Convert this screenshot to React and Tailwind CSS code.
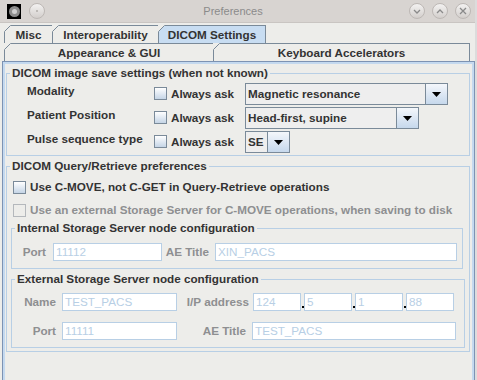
import React from "react";

const F = "font-['Liberation_Sans',Arial,sans-serif]";

function Tab({ children, className, selected }) {
  return (
    <div
      className={
        "relative flex items-center justify-center border-l border-t border-r border-[#7a8a99] text-[11.7px] font-bold text-[#333333] " +
        (selected ? "bg-[#c8ddf2] " : "bg-[#ededea] ") +
        className
      }
    >
      <svg className="absolute left-[-1px] top-[-1px]" width="7" height="7">
        <path d="M0 0H7L0 7Z" fill="#ededea" />
        <line x1="0.5" y1="6.5" x2="6.5" y2="0.5" stroke="#7a8a99" />
      </svg>
      <span className="leading-none">{children}</span>
    </div>
  );
}

function Check({ disabled }) {
  return (
    <div
      className={
        "w-[13px] h-[13px] shrink-0 border " +
        (disabled
          ? "border-[#b4b8bc] bg-[#ededea]"
          : "border-[#7a8a99] bg-gradient-to-b from-[#ffffff] to-[#c5d5e6]")
      }
    />
  );
}

function Combo({ text, width }) {
  return (
    <div
      className="flex h-[22px] border border-[#7a8a99] bg-[#eeeeee]"
      style={{ width }}
    >
      <div className="flex-1 flex items-center pl-[2px] text-[11.7px] font-bold text-[#333333]">
        {text}
      </div>
      <div className="w-[22px] border-l border-[#7a8a99] bg-gradient-to-b from-[#f4f7fb] to-[#c6d8ec] flex items-center justify-center">
        <svg width="9" height="5">
          <path d="M0 0H9L4.5 5Z" fill="#000" />
        </svg>
      </div>
    </div>
  );
}

function Input({ text, className }) {
  return (
    <div
      className={
        "h-[18px] border border-[#b8cfe5] bg-white flex items-center pl-[2px] text-[11.7px] text-[#b8cfe5] " +
        className
      }
    >
      {text}
    </div>
  );
}

function Label({ children, className }) {
  return (
    <div
      className={
        "text-right text-[11.7px] font-bold text-[#8e8f91] whitespace-nowrap " +
        className
      }
    >
      {children}
    </div>
  );
}

function TitleCircle({ children }) {
  return (
    <div className="w-[16px] h-[16px] rounded-full border border-[#bdb8b5] bg-gradient-to-b from-[#f3f2f1] to-[#d3cfcc] flex items-center justify-center">
      {children}
    </div>
  );
}

function SaveRow({ label, combo }) {
  return (
    <div className="flex items-center h-[22px]">
      <div className="ml-[17px] w-[127px] mb-[7px] text-[11.7px] font-bold text-[#333333] whitespace-nowrap">
        {label}
      </div>
      <div className="w-[91px] flex items-center gap-[4px]">
        <Check />
        <span className="text-[11.7px] font-bold text-[#333333]">Always ask</span>
      </div>
      {combo}
    </div>
  );
}

export default function App() {
  return (
    <div className={"w-[477px] h-[380px] overflow-hidden bg-[#ededea] flex " + F}>
      <div className="w-[475px] flex flex-col">
        {/* Title bar */}
        <div className="h-[23px] shrink-0 bg-[#d8d4d1] border-b border-[#c9c5c2] flex items-center">
          <div className="ml-[7px] w-[14px] h-[15px] bg-black flex items-center justify-center">
            <div className="w-[11px] h-[11px] rounded-full bg-[#8c8c8c] flex items-center justify-center">
              <div className="w-[5px] h-[5px] rounded-full bg-[#d0d0d0]" />
            </div>
          </div>
          <div className="ml-[8px]">
            <TitleCircle>
              <div className="w-[2px] h-[2px] rounded-full bg-[#b0aca9]" />
            </TitleCircle>
          </div>
          <div className="flex-1 text-center text-[11px] text-[#8b8b8b] pl-[12px]">
            Preferences
          </div>
          <div className="flex gap-[7px] mr-[4px]">
            <TitleCircle>
              <svg width="8" height="5">
                <path d="M1 1L4 4L7 1" stroke="#8a8a8a" strokeWidth="1.3" fill="none" />
              </svg>
            </TitleCircle>
            <TitleCircle>
              <svg width="8" height="5">
                <path d="M1 4L4 1L7 4" stroke="#8a8a8a" strokeWidth="1.3" fill="none" />
              </svg>
            </TitleCircle>
            <TitleCircle>
              <svg width="8" height="8">
                <path d="M1 1L7 7M7 1L1 7" stroke="#8a8a8a" strokeWidth="1.3" fill="none" />
              </svg>
            </TitleCircle>
          </div>
        </div>

        {/* Tabs */}
        <div className="mt-[2px] pl-[4px] flex h-[18px]">
          <Tab className="w-[49px]">Misc</Tab>
          <Tab className="w-[107px] ml-[-1px]">Interoperability</Tab>
          <Tab className="w-[108px] ml-[-1px]" selected>
            DICOM Settings
          </Tab>
        </div>
        <div className="pl-[4px] flex h-[18px]">
          <Tab className="w-[210px]">Appearance &amp; GUI</Tab>
          <Tab className="w-[257px] ml-[-1px]">Keyboard Accelerators</Tab>
        </div>

        {/* Content panel */}
        <div className="ml-[2px] w-[473px] flex-1 border-t border-l border-r border-[#7d93b3]">
          <div className="h-full border-t-2 border-l-2 border-r-2 border-[#c4d9ef] pl-[1px] pr-[2px] pt-[2px]">
            {/* Section 1 */}
            <fieldset className="border border-[#b8cfe5] pl-[3px] pb-[2px]">
              <legend className="px-[2px] h-[14px] leading-[14px] text-[11.7px] font-bold text-[#333333]">
                DICOM image save settings (when not known)
              </legend>
              <div className="mt-[3px] flex flex-col gap-[2px]">
                <SaveRow label="Modality" combo={<Combo text="Magnetic resonance" width={203} />} />
                <SaveRow label="Patient Position" combo={<Combo text="Head-first, supine" width={174} />} />
                <SaveRow label="Pulse sequence type" combo={<Combo text="SE" width={45} />} />
              </div>
            </fieldset>

            {/* Section 2 */}
            <fieldset className="mt-[3px] border border-[#b8cfe5] pl-[3px] pb-[3px]">
              <legend className="px-[2px] h-[14px] leading-[14px] text-[11.7px] font-bold text-[#333333]">
                DICOM Query/Retrieve preferences
              </legend>
              <div className="mt-[5px] h-[18px] flex items-center ml-[3px] gap-[4px]">
                <Check />
                <span className="text-[11.7px] font-bold text-[#333333]">
                  Use C-MOVE, not C-GET in Query-Retrieve operations
                </span>
              </div>
              <div className="mt-[5px] h-[18px] flex items-center ml-[3px] gap-[4px]">
                <Check disabled />
                <span className="text-[11.7px] font-bold text-[#8e8f91] whitespace-nowrap">
                  Use an external Storage Server for C-MOVE operations, when saving to disk
                </span>
              </div>

              {/* Internal */}
              <fieldset className="mt-[2px] ml-[1px] w-[452px] border border-[#b8cfe5] pl-[3px] pb-[7px]">
                <legend className="px-[2px] h-[14px] leading-[14px] text-[11.7px] font-bold text-[#333333]">
                  Internal Storage Server node configuration
                </legend>
                <div className="mt-[8px] flex items-center">
                  <Label className="w-[38px] pr-[7px]">Port</Label>
                  <Input text="11112" className="w-[109px]" />
                  <Label className="w-[53px] pr-[6px]">AE Title</Label>
                  <Input text="XIN_PACS" className="w-[242px]" />
                </div>
              </fieldset>

              {/* External */}
              <fieldset className="mt-[3px] ml-[1px] w-[454px] border border-[#b8cfe5] pl-[3px] pb-[7px]">
                <legend className="px-[2px] h-[14px] leading-[14px] text-[11.7px] font-bold text-[#333333]">
                  External Storage Server node configuration
                </legend>
                <div className="mt-[7px] flex items-center">
                  <Label className="w-[47px] pr-[6px]">Name</Label>
                  <Input text="TEST_PACS" className="w-[115px]" />
                  <Label className="w-[76px] pr-[4px]">I/P address</Label>
                  <Input text="124" className="w-[48px]" />
                  <div className="w-[3px] h-[18px] flex items-end justify-center pb-[3px]">
                    <div className="w-[2px] h-[2px] bg-black" />
                  </div>
                  <Input text="5" className="w-[48px]" />
                  <div className="w-[3px] h-[18px] flex items-end justify-center pb-[3px]">
                    <div className="w-[2px] h-[2px] bg-black" />
                  </div>
                  <Input text="1" className="w-[48px]" />
                  <div className="w-[3px] h-[18px] flex items-end justify-center pb-[3px]">
                    <div className="w-[2px] h-[2px] bg-black" />
                  </div>
                  <Input text="88" className="w-[48px]" />
                </div>
                <div className="mt-[11px] flex items-center">
                  <Label className="w-[47px] pr-[6px]">Port</Label>
                  <Input text="11111" className="w-[115px]" />
                  <Label className="w-[75px] pr-[6px]">AE Title</Label>
                  <Input text="TEST_PACS" className="w-[204px]" />
                </div>
              </fieldset>
            </fieldset>
          </div>
        </div>
      </div>
      <div className="w-[2px] bg-[#dcdcdc]" />
    </div>
  );
}
